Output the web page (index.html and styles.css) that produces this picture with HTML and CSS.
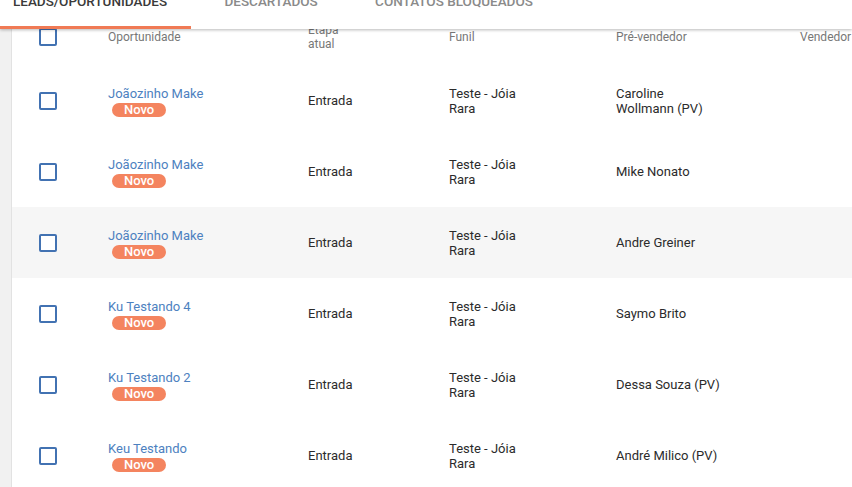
FILE: index.html
```html
<!DOCTYPE html>
<html lang="pt-BR">
<head>
<meta charset="utf-8">
<title>Leads</title>
<link rel="stylesheet" href="styles.css">
</head>
<body>
<div class="app">
  <aside class="rail"></aside>
  <main class="content">
    <div class="row head">
      <div class="cell c-check"><span class="box"></span></div>
      <div class="cell">Oportunidade</div>
      <div class="cell"><span class="w-etapa">Etapa atual</span></div>
      <div class="cell">Funil</div>
      <div class="cell">Pré-vendedor</div>
      <div class="cell">Vendedor</div>
    </div>

    <div class="row">
      <div class="cell c-check"><span class="box"></span></div>
      <div class="cell c-opp"><a class="name">Joãozinho Make</a><span class="badge">Novo</span></div>
      <div class="cell">Entrada</div>
      <div class="cell"><span class="w-funil">Teste - Jóia Rara</span></div>
      <div class="cell"><span class="w-pv">Caroline Wollmann (PV)</span></div>
      <div class="cell"></div>
    </div>

    <div class="row">
      <div class="cell c-check"><span class="box"></span></div>
      <div class="cell c-opp"><a class="name">Joãozinho Make</a><span class="badge">Novo</span></div>
      <div class="cell">Entrada</div>
      <div class="cell"><span class="w-funil">Teste - Jóia Rara</span></div>
      <div class="cell"><span class="w-pv">Mike Nonato</span></div>
      <div class="cell"></div>
    </div>

    <div class="row hover">
      <div class="cell c-check"><span class="box"></span></div>
      <div class="cell c-opp"><a class="name">Joãozinho Make</a><span class="badge">Novo</span></div>
      <div class="cell">Entrada</div>
      <div class="cell"><span class="w-funil">Teste - Jóia Rara</span></div>
      <div class="cell"><span class="w-pv">Andre Greiner</span></div>
      <div class="cell"></div>
    </div>

    <div class="row">
      <div class="cell c-check"><span class="box"></span></div>
      <div class="cell c-opp"><a class="name">Ku Testando 4</a><span class="badge">Novo</span></div>
      <div class="cell">Entrada</div>
      <div class="cell"><span class="w-funil">Teste - Jóia Rara</span></div>
      <div class="cell"><span class="w-pv">Saymo Brito</span></div>
      <div class="cell"></div>
    </div>

    <div class="row">
      <div class="cell c-check"><span class="box"></span></div>
      <div class="cell c-opp"><a class="name">Ku Testando 2</a><span class="badge">Novo</span></div>
      <div class="cell">Entrada</div>
      <div class="cell"><span class="w-funil">Teste - Jóia Rara</span></div>
      <div class="cell"><span class="w-pv">Dessa Souza (PV)</span></div>
      <div class="cell"></div>
    </div>

    <div class="row">
      <div class="cell c-check"><span class="box"></span></div>
      <div class="cell c-opp"><a class="name">Keu Testando</a><span class="badge">Novo</span></div>
      <div class="cell">Entrada</div>
      <div class="cell"><span class="w-funil">Teste - Jóia Rara</span></div>
      <div class="cell"><span class="w-pv">André Milico (PV)</span></div>
      <div class="cell"></div>
    </div>
  </main>

  <nav class="tabs">
    <div class="tab active">Leads/Oportunidades</div>
    <div class="tab">Descartados</div>
    <div class="tab">Contatos bloqueados</div>
  </nav>
</div>
</body>
</html>
```

FILE: styles.css
```css
html, body {
  margin: 0;
  padding: 0;
  overflow: hidden;
  background: #ffffff;
}

body {
  font-family: Roboto, "Liberation Sans", Arial, sans-serif;
  color: #333333;
}

.app {
  position: relative;
  display: flex;
  width: 852px;
  height: 487px;
  overflow: hidden;
}

.rail {
  flex: 0 0 11px;
  background: #f1f1f1;
  border-right: 1px solid #e2e2e2;
}

.content {
  flex: 1;
  padding-top: 9px;
  background: #ffffff;
  min-width: 0;
}

.row {
  display: grid;
  grid-template-columns: 96px 200px 141px 167px 184px 1fr;
  height: 71px;
  align-items: center;
  font-size: 13px;
  color: #2b2b2b;
}

.row.hover {
  background: #f6f6f6;
}

.row.head {
  height: 56px;
  font-size: 12px;
  color: #777777;
}

.cell {
  white-space: normal;
  line-height: 15px;
}

.row.head .cell {
  line-height: 14px;
}

.c-check {
  padding-left: 27px;
  display: flex;
  align-items: center;
}

.box {
  display: block;
  width: 14px;
  height: 14px;
  border: 2px solid #4272b2;
  border-radius: 2px;
  background: #ffffff;
}

.w-etapa {
  display: block;
  max-width: 48px;
}

.w-funil {
  display: block;
  max-width: 82px;
}

.w-pv {
  display: block;
  max-width: 106px;
}

.c-opp {
  display: flex;
  flex-direction: column;
  align-items: flex-start;
  margin-top: 1px;
}

.name {
  color: #4d81c0;
  font-size: 13px;
  line-height: 15px;
  cursor: pointer;
}

.badge {
  display: inline-block;
  margin-left: 4px;
  margin-top: 2px;
  padding: 0 12px;
  height: 14px;
  line-height: 14px;
  border-radius: 7px;
  background: #f4845f;
  color: #ffffff;
  font-size: 13px;
  font-weight: 500;
}

.tabs {
  position: absolute;
  top: 0;
  left: 0;
  right: 0;
  height: 29px;
  display: flex;
  background: #ffffff;
  box-shadow: 0 1px 3px rgba(0, 0, 0, 0.28);
  z-index: 2;
}

.tab {
  position: relative;
  box-sizing: border-box;
  min-width: 160px;
  padding: 0 24px;
  margin-top: -9px;
  height: 38px;
  line-height: 20px;
  font-size: 13.5px;
  font-weight: 500;
  text-align: center;
  text-transform: uppercase;
  color: #8a8a8a;
  white-space: nowrap;
}

.tab.active {
  margin-left: -11px;
  color: #3a3a3a;
}

.tab.active::after {
  content: "";
  position: absolute;
  left: 0;
  right: 0;
  bottom: 0;
  height: 3px;
  background: #f07a55;
}
```
